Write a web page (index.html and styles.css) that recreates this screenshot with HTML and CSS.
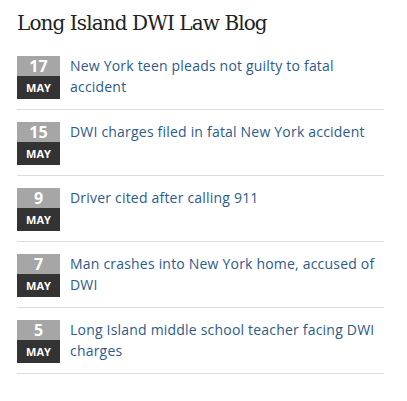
FILE: index.html
```html
<!DOCTYPE html>
<html>
<head>
<meta charset="utf-8">
<link rel="stylesheet" href="styles.css">
</head>
<body>
<div class="widget">
  <h2 class="title">Long Island DWI Law Blog</h2>
  <ul class="posts">
    <li class="post">
      <div class="date"><span class="day">17</span><span class="month">May</span></div>
      <a class="link" href="#">New York teen pleads not guilty to fatal accident</a>
    </li>
    <li class="post">
      <div class="date"><span class="day">15</span><span class="month">May</span></div>
      <a class="link" href="#">DWI charges filed in fatal New York accident</a>
    </li>
    <li class="post">
      <div class="date"><span class="day">9</span><span class="month">May</span></div>
      <a class="link" href="#">Driver cited after calling 911</a>
    </li>
    <li class="post">
      <div class="date"><span class="day">7</span><span class="month">May</span></div>
      <a class="link" href="#">Man crashes into New York home, accused of DWI</a>
    </li>
    <li class="post">
      <div class="date"><span class="day">5</span><span class="month">May</span></div>
      <a class="link" href="#">Long Island middle school teacher facing DWI charges</a>
    </li>
  </ul>
</div>
</body>
</html>
```

FILE: styles.css
```css
html, body {
  margin: 0;
  padding: 0;
  background: #fff;
}
.widget {
  width: 367px;
  padding: 0 0 0 17px;
}
.title {
  font-family: "DejaVu Serif", serif;
  font-weight: normal;
  font-size: 20px;
  line-height: 26px;
  color: #222;
  margin: 0;
  padding: 10px 0 8px;
  letter-spacing: -0.9px;
}
.posts {
  list-style: none;
  margin: 0;
  padding: 0;
}
.post {
  display: flex;
  align-items: flex-start;
  gap: 10px;
  padding: 12px 0 10px;
  border-bottom: 1px solid #ddd;
}
.date {
  flex: 0 0 43px;
  display: flex;
  flex-direction: column;
  font-family: "Open Sans", sans-serif;
  font-weight: bold;
  color: #fff;
  text-align: center;
}
.day {
  background: #a6a6a6;
  height: 20px;
  line-height: 20px;
  font-size: 16px;
}
.month {
  background: #333;
  height: 23px;
  line-height: 23px;
  font-size: 11px;
  text-transform: uppercase;
}
.link {
  font-family: "Open Sans", sans-serif;
  font-size: 14px;
  line-height: 21px;
  letter-spacing: 0.2px;
  color: #2b5b8c;
  text-decoration: none;
  margin-top: -1px;
}
```
